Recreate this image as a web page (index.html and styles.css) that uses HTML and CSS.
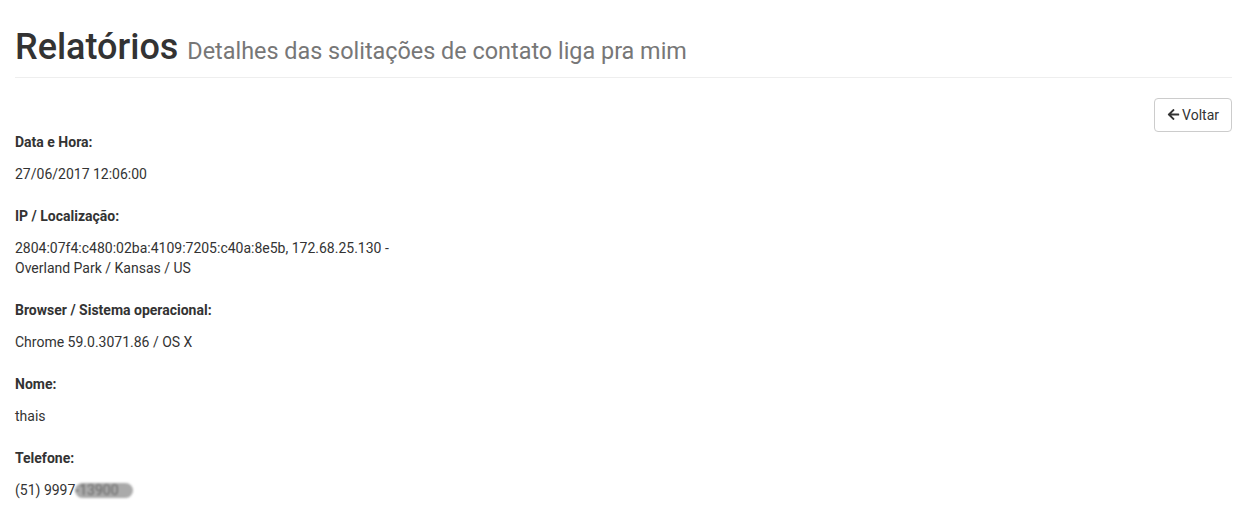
FILE: index.html
```html
<!DOCTYPE html>
<html lang="pt-BR">
<head>
<meta charset="utf-8">
<title>Relatórios</title>
<link rel="stylesheet" href="styles.css">
</head>
<body>
<div class="container">
  <div class="page-header">
    <h1>Relatórios <small>Detalhes das solitações de contato liga pra mim</small></h1>
  </div>
  <div class="actions">
    <a class="btn" href="#">
      <svg class="icon" viewBox="0 0 448 512" width="13" height="13" aria-hidden="true"><path fill="currentColor" d="M257.5 445.1l-22.2 22.2c-9.4 9.4-24.6 9.4-33.9 0L7 273c-9.4-9.4-9.4-24.6 0-33.9L201.4 44.7c9.4-9.4 24.6-9.4 33.9 0l22.2 22.2c9.5 9.5 9.3 25-.4 34.3L136.6 216H424c13.3 0 24 10.7 24 24v32c0 13.3-10.7 24-24 24H136.6l120.5 114.8c9.8 9.3 10 24.8.4 34.3z"/></svg>Voltar
    </a>
  </div>
  <div class="form-group">
    <label>Data e Hora:</label>
    <p class="static">27/06/2017 12:06:00</p>
  </div>
  <div class="form-group">
    <label>IP / Localização:</label>
    <p class="static">2804:07f4:c480:02ba:4109:7205:c40a:8e5b, 172.68.25.130 -<br>Overland Park / Kansas / US</p>
  </div>
  <div class="form-group">
    <label>Browser / Sistema operacional:</label>
    <p class="static">Chrome 59.0.3071.86 / OS X</p>
  </div>
  <div class="form-group">
    <label>Nome:</label>
    <p class="static">thais</p>
  </div>
  <div class="form-group">
    <label>Telefone:</label>
    <p class="static">(51) 9997<span class="blur">-13900</span></p>
  </div>
</div>
</body>
</html>
```

FILE: styles.css
```css
* { box-sizing: border-box; }
html, body { margin: 0; padding: 0; background: #fff; }
body {
  font-family: Roboto, "Helvetica Neue", Arial, sans-serif;
  font-size: 14px;
  line-height: 20px;
  color: #333;
}
.container {
  padding: 0 20px 0 15px;
}
.page-header {
  margin: 0 0 20px;
  padding-bottom: 9px;
  border-bottom: 1px solid #eee;
}
.page-header h1 {
  margin: 0;
  padding-top: 28px;
  font-size: 36px;
  font-weight: 500;
  line-height: 39.6px;
  color: #333;
}
.page-header h1 small {
  font-size: 65%;
  font-weight: 400;
  line-height: 1;
  color: #777;
}
.actions {
  display: flex;
  justify-content: flex-end;
}
.btn {
  display: inline-flex;
  align-items: center;
  gap: 2px;
  height: 34px;
  padding: 6px 12px;
  font-size: 14px;
  line-height: 20px;
  color: #333;
  text-decoration: none;
  background: #fff;
  border: 1px solid #ccc;
  border-radius: 4px;
}
.icon { display: block; }
.form-group { margin-bottom: 15px; }
.form-group label {
  display: block;
  margin-bottom: 5px;
  font-weight: 700;
}
.static {
  margin: 0;
  padding: 7px 0;
  min-height: 34px;
}
.blur {
  display: inline-block;
  line-height: 15px;
  color: #666;
  background: #aaa;
  border-radius: 8px;
  filter: blur(1.2px);
  padding: 0 14px 0 0;
}
```
